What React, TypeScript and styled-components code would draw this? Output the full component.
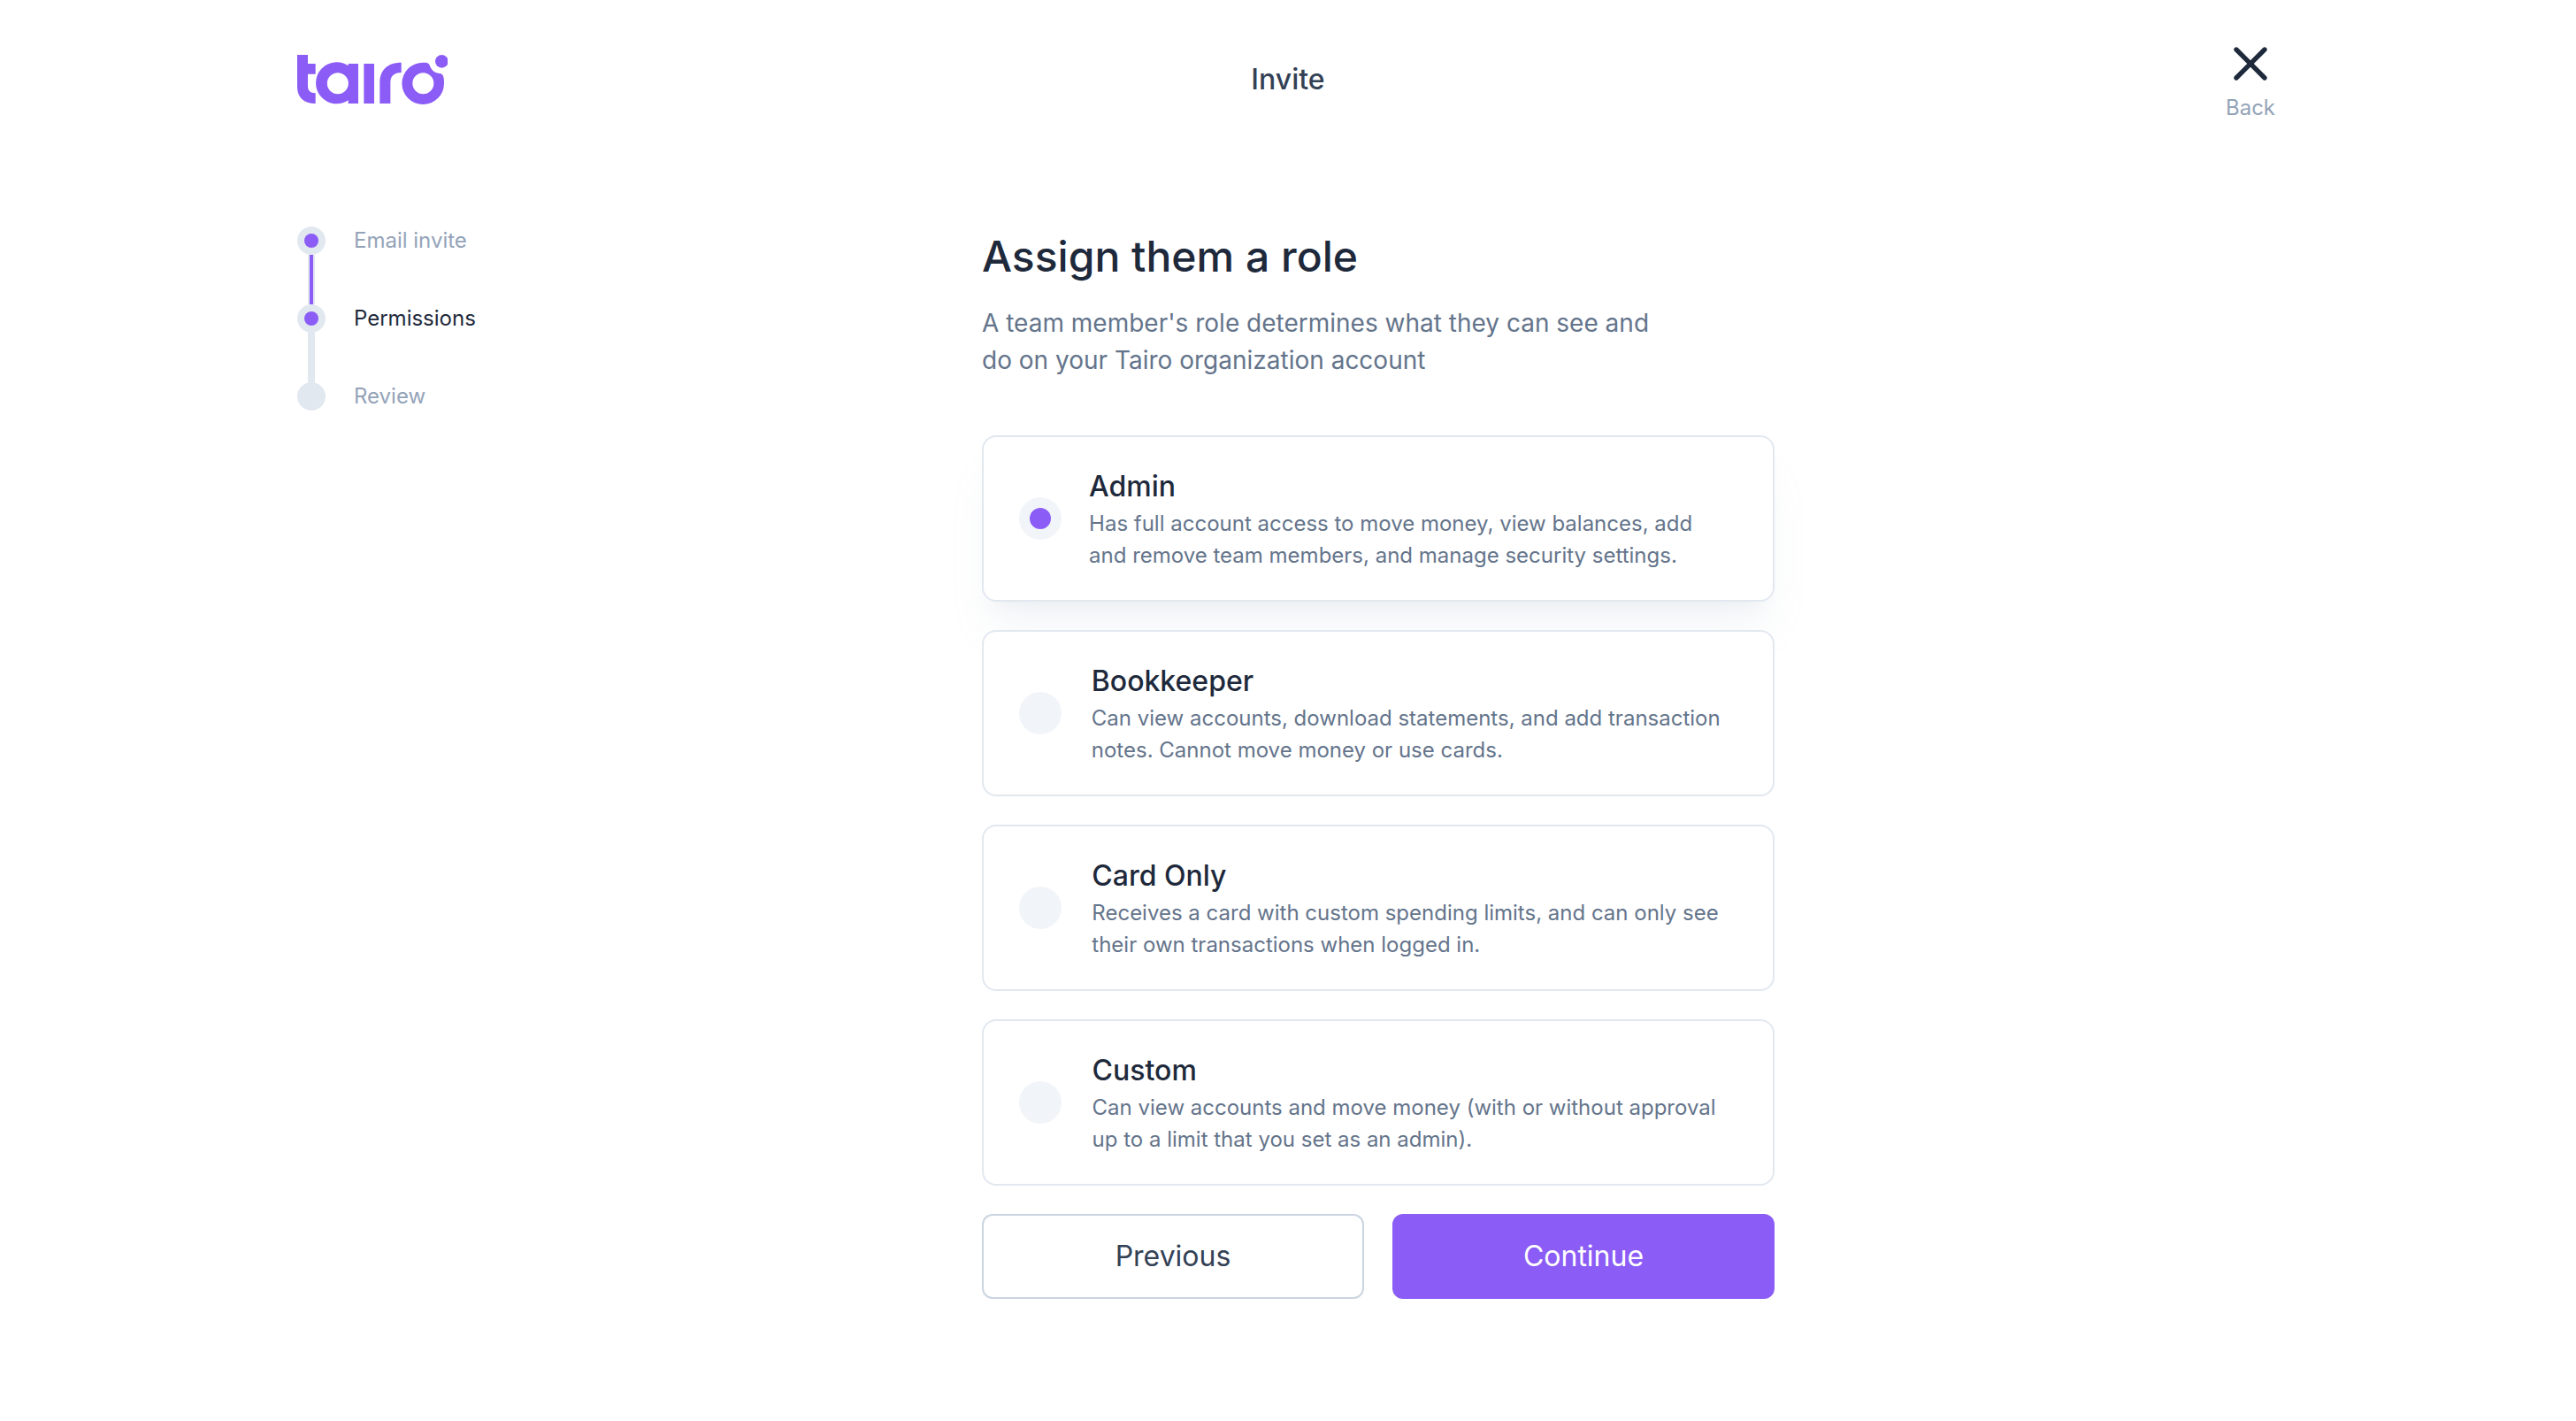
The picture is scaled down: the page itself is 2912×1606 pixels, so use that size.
import React, { useState } from "react";
import styled, { createGlobalStyle } from "styled-components";

const color = {
  primary: "#8b5cf6",
  ink: "#1e293b",
  inkSoft: "#334155",
  text: "#64748b",
  muted: "#94a3b8",
  line: "#e2e8f0",
  lineStrong: "#cbd5e1",
  fill: "#f1f5f9",
  shadow: "rgba(148, 163, 184, 0.1)",
};

const GlobalStyle = createGlobalStyle`
  *, *::before, *::after { box-sizing: border-box; }
  body {
    margin: 0;
    background: #fff;
    color: ${color.ink};
    font-family: Inter, "Liberation Sans", sans-serif;
    font-size: 24px;
    line-height: 36px;
  }
  h1, h2, h3, p, ol { margin: 0; padding: 0; }
`;

const Page = styled.div`
  max-width: 2304px;
  margin: 0 auto;
  padding: 0 32px 64px;
`;

const Header = styled.header`
  display: grid;
  grid-template-columns: 1fr auto 1fr;
  align-items: center;
  padding: 40px 0;
`;

const LogoLink = styled.a`
  display: block;
  justify-self: start;
  color: ${color.primary};

  svg {
    display: block;
  }
`;

const PageTitle = styled.h1`
  font-size: 32px;
  line-height: 48px;
  font-weight: 500;
  color: ${color.inkSoft};
`;

const BackLink = styled.a`
  display: flex;
  flex-direction: column;
  align-items: center;
  justify-self: end;
  color: ${color.muted};
  text-decoration: none;

  svg {
    color: ${color.ink};
  }
`;

const Body = styled.div`
  display: flex;
  align-items: flex-start;
  padding-top: 76px;
`;

const Steps = styled.ol`
  flex: none;
  width: 204px;
  list-style: none;
`;

const Step = styled.li<{ $current?: boolean }>`
  display: grid;
  grid-template-columns: 32px auto;
  column-gap: 32px;
  align-items: center;
  line-height: 32px;
  white-space: nowrap;
  color: ${(p) => (p.$current ? color.ink : color.muted)};
`;

const StepDot = styled.span<{ $reached: boolean }>`
  display: grid;
  place-items: center;
  width: 32px;
  height: 32px;
  border-radius: 50%;
  background: ${color.line};

  &::before {
    content: "";
    width: 16px;
    height: 16px;
    border-radius: 50%;
    background: ${(p) => (p.$reached ? color.primary : "transparent")};
  }
`;

const StepLine = styled.span<{ $filled: boolean }>`
  justify-self: center;
  width: 8px;
  height: 56px;
  border: solid ${color.line};
  border-width: 0 2px;
  background: ${(p) => (p.$filled ? color.primary : color.line)};
`;

const Form = styled.form`
  flex: 0 1 896px;
  margin: 0 auto;
`;

const Heading = styled.h2`
  padding-top: 4px;
  font-size: 48px;
  line-height: 60px;
  font-weight: 500;
`;

const Lead = styled.p`
  max-width: 768px;
  padding: 24px 0 64px;
  font-size: 28px;
  line-height: 42px;
  color: ${color.text};
`;

const RoleList = styled.div`
  display: grid;
  gap: 32px;
`;

const RoleCard = styled.label<{ $selected: boolean }>`
  display: flex;
  align-items: center;
  padding: 32px 48px 32px 40px;
  border: 2px solid ${color.line};
  border-radius: 16px;
  background: #fff;
  cursor: pointer;
  box-shadow: ${(p) =>
    p.$selected
      ? `0 40px 50px -10px ${color.shadow}, 0 16px 20px -12px ${color.shadow}`
      : "none"};
`;

const RadioCell = styled.span`
  display: flex;
  flex: 0 0.38 96px;
`;

const Radio = styled.input`
  appearance: none;
  display: grid;
  place-items: center;
  width: 48px;
  height: 48px;
  margin: 0;
  border-radius: 50%;
  background: ${color.fill};

  &:checked::before {
    content: "";
    width: 24px;
    height: 24px;
    border-radius: 50%;
    background: ${color.primary};
  }
`;

const RoleText = styled.span`
  flex: 0 1 auto;
`;

const RoleName = styled.span`
  display: block;
  font-size: 32px;
  line-height: 48px;
  font-weight: 500;
`;

const RoleNote = styled.span`
  display: block;
  color: ${color.text};
`;

const Actions = styled.div`
  display: grid;
  grid-template-columns: 1fr 1fr;
  gap: 32px;
  padding-top: 32px;
`;

const Button = styled.button<{ $primary?: boolean }>`
  height: 96px;
  border: 2px solid ${(p) => (p.$primary ? color.primary : color.lineStrong)};
  border-radius: 12px;
  background: ${(p) => (p.$primary ? color.primary : "#fff")};
  color: ${(p) => (p.$primary ? "#fff" : color.inkSoft)};
  font-family: inherit;
  font-size: 32px;
  line-height: 48px;
  font-weight: 400;
  cursor: pointer;
`;

const Logo = () => (
  <svg width="170" height="56" viewBox="48 66 510 168" fill="currentColor" aria-hidden="true">
    <path d="M48 66H84V96H110V131H84V172C84 188 92 196 110 196V231C70 231 48 210 48 174Z" />
    <path
      fillRule="evenodd"
      d="M221 103V96H255V231H221V220A70.500 70.500 0 1 1 221 103ZM185.500 126.500A36 36 0 1 0 185.500 198.500A36 36 0 1 0 185.500 126.500Z"
    />
    <path d="M274 96H309V231H274Z" />
    <path d="M328 231V160C328 117 355 92 401 92V126C376 126 364 138 364 161V231Z" />
    <path
      fillRule="evenodd"
      d="M475 92C488 92 494 93 497 101C502 115 511 126 526 128C537 129 541 131 544 141C546 149 546 156 546 163A71.500 71 0 1 1 475 92ZM475 126.500A36 36 0 1 0 475 198.500A36 36 0 1 0 475 126.500Z"
    />
    <circle cx="538" cy="88" r="22" />
  </svg>
);

const CloseIcon = () => (
  <svg width="64" height="64" viewBox="0 0 24 24" fill="none" stroke="currentColor" strokeWidth="2" strokeLinecap="round" aria-hidden="true">
    <path d="M18 6L6 18M6 6l12 12" />
  </svg>
);

const steps = ["Email invite", "Permissions", "Review"];
const currentStep = 1;

const roles = [
  {
    name: "Admin",
    note: "Has full account access to move money, view balances, add and remove team members, and manage security settings.",
  },
  {
    name: "Bookkeeper",
    note: "Can view accounts, download statements, and add transaction notes. Cannot move money or use cards.",
  },
  {
    name: "Card Only",
    note: "Receives a card with custom spending limits, and can only see their own transactions when logged in.",
  },
  {
    name: "Custom",
    note: "Can view accounts and move money (with or without approval up to a limit that you set as an admin).",
  },
];

export default function App() {
  const [role, setRole] = useState("Admin");

  return (
    <>
      <GlobalStyle />
      <Page>
        <Header>
          <LogoLink href="#" aria-label="Tairo">
            <Logo />
          </LogoLink>
          <PageTitle>Invite</PageTitle>
          <BackLink href="#">
            <CloseIcon />
            Back
          </BackLink>
        </Header>
        <Body>
          <Steps>
            {steps.map((label, i) => (
              <Step key={label} $current={i === currentStep}>
                <StepDot $reached={i <= currentStep} />
                {label}
                {i < steps.length - 1 && <StepLine $filled={i < currentStep} />}
              </Step>
            ))}
          </Steps>
          <Form onSubmit={(e) => e.preventDefault()}>
            <Heading>Assign them a role</Heading>
            <Lead>
              A team member's role determines what they can see and do on your Tairo organization account
            </Lead>
            <RoleList role="radiogroup" aria-label="Role">
              {roles.map(({ name, note }) => (
                <RoleCard key={name} $selected={role === name}>
                  <RadioCell>
                    <Radio
                      type="radio"
                      name="role"
                      value={name}
                      checked={role === name}
                      onChange={() => setRole(name)}
                    />
                  </RadioCell>
                  <RoleText>
                    <RoleName>{name}</RoleName>
                    <RoleNote>{note}</RoleNote>
                  </RoleText>
                </RoleCard>
              ))}
            </RoleList>
            <Actions>
              <Button type="button">Previous</Button>
              <Button type="submit" $primary>
                Continue
              </Button>
            </Actions>
          </Form>
        </Body>
      </Page>
    </>
  );
}
